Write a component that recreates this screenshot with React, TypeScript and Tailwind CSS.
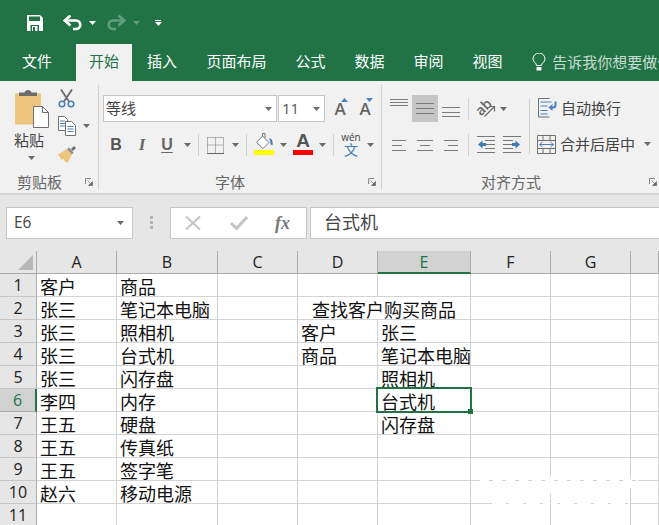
import React from "react";

const GREEN = "#217346";

const Caret = ({ color = "#6a6a6a" }: { color?: string }) => (
  <svg width="7" height="4" viewBox="0 0 7 4" className="shrink-0">
    <path d="M0 0h7L3.5 4z" fill={color} />
  </svg>
);

const Launcher = () => (
  <svg width="8" height="8" viewBox="0 0 8 8" className="shrink-0">
    <path d="M.5 6V.5H6" fill="none" stroke="#8a8a8a" />
    <path d="M2.5 2.5l4 4M7.5 3.5v4h-4z" fill="#6a6a6a" stroke="#6a6a6a" strokeWidth=".7" />
  </svg>
);

const Lines = ({ w, h, lines, color = "#7b7b7b" }: { w: number; h: number; lines: number[][]; color?: string }) => (
  <svg width={w} height={h} viewBox={`0 0 ${w} ${h}`} className="shrink-0">
    {lines.map(([x, len, y], i) => (
      <rect key={i} x={x} y={y} width={len} height="1" fill={color} />
    ))}
  </svg>
);

const VSep = ({ h }: { h: string }) => <div className={`w-px shrink-0 bg-[#d0d0d0] ${h}`} />;

const Slot = ({ w, children }: { w: string; children: React.ReactNode }) => (
  <div className={`flex shrink-0 items-center justify-center ${w}`}>{children}</div>
);

const SaveIcon = () => (
  <svg width="16" height="16" viewBox="0 0 16 16">
    <path d="M0 0h13l3 3v13H0z" fill="#fff" />
    <rect x="2" y="1.500" width="11" height="4.500" fill={GREEN} />
    <rect x="3.500" y="10" width="8.500" height="6" fill={GREEN} />
    <rect x="5" y="11" width="5.500" height="5" fill="#fff" />
    <rect x="6" y="12" width="2" height="4" fill={GREEN} />
  </svg>
);

const Undo = ({ opacity = 1, flip = false }: { opacity?: number; flip?: boolean }) => (
  <svg width="19" height="16" viewBox="0 0 19 16" style={{ opacity }} className={flip ? "-scale-x-100" : ""}>
    <path d="M3 5.500h10a4.200 4.200 0 0 1 0 8.500h-3" fill="none" stroke="#fff" strokeWidth="2.600" />
    <path d="M7.500 0.500L1.800 5.500l5.700 5" fill="none" stroke="#fff" strokeWidth="2.600" />
  </svg>
);

const PasteIcon = () => (
  <svg width="36" height="40" viewBox="0 0 36 40">
    <path d="M1 5.500h26v31H1z" fill="#eec57f" />
    <path d="M5 8V4.500h5.500C11 1 17 1 17.500 4.500H23V8z" fill="#6d6d6d" />
    <path d="M19.500 18.500h9l6 6v15h-15z" fill="#fff" stroke="#707070" />
    <path d="M28.500 18.500v6h6" fill="none" stroke="#707070" />
  </svg>
);

const Scissors = () => (
  <svg width="17" height="19" viewBox="0 0 17 19">
    <path d="M3 .5l8 12M14 .5L6 12.500" fill="none" stroke="#6a6a6a" strokeWidth="1.800" />
    <circle cx="4" cy="15" r="2.800" fill="none" stroke="#4a81bd" strokeWidth="1.500" />
    <circle cx="13" cy="15" r="2.800" fill="none" stroke="#4a81bd" strokeWidth="1.500" />
  </svg>
);

const CopyIcon = () => (
  <svg width="18" height="20" viewBox="0 0 18 20">
    <path d="M.5.500h6l3 3v11h-9z" fill="#fff" stroke="#707070" />
    <path d="M2 5h5M2 7.500h5M2 10h5" stroke="#4a81bd" />
    <path d="M7.500 5.500h6l4 4v10h-10z" fill="#fff" stroke="#707070" />
    <path d="M9.500 10.500h6M9.500 13h6M9.500 15.500h6" stroke="#4a81bd" />
  </svg>
);

const BrushIcon = () => (
  <svg width="19" height="18" viewBox="0 0 19 18">
    <path d="M0 9.500L9 4l5 5.500-4.500 8.500-3-2-1-2-2 .5z" fill="#eec57f" />
    <path d="M9 4l5 5.500 1.500-2L11 2.500z" fill="#8a8a8a" />
    <path d="M13 4l3-3 2 2-3 3z" fill="#6d6d6d" />
  </svg>
);

const BorderIcon = () => (
  <svg width="17" height="17" viewBox="0 0 17 17">
    <path d="M.5.500h16v15M.5.500v15M8.500.500v15M.5 8h16" fill="none" stroke="#777" strokeDasharray="1 1" />
    <rect x="0" y="16" width="17" height="1" fill="#666" />
  </svg>
);

const FillIcon = () => (
  <svg width="20" height="22" viewBox="0 0 20 22">
    <path d="M2.500 9.500l6-6.500 6.500 6.500-6 6z" fill="#fff" stroke="#777" />
    <path d="M8.500 3V.5h2.500V5" fill="none" stroke="#777" />
    <path d="M15 5c3 1 4 3 3.500 7-1 .5-2-.5-2-1.500 0-1.500-.5-3-1.500-5.500z" fill="#3f7ab8" />
    <rect x="0" y="17" width="20" height="5" fill="#ffff00" />
  </svg>
);

const WrapIcon = () => (
  <svg width="20" height="20" viewBox="0 0 20 20">
    <path d="M.5.500h11M.5.500v18.500h11" fill="none" stroke="#707070" />
    <path d="M2.500 4h11M2.500 8h7M2.500 12.500h7M2.500 16h7" stroke="#4a81bd" />
    <path d="M17.500 3.500v3.500a2.500 2.500 0 0 1-2.500 2.500h-3" fill="none" stroke="#4a81bd" strokeWidth="2" />
    <path d="M14.500 6l-4 3.500 4 3.500z" fill="#4a81bd" />
  </svg>
);

const MergeIcon = () => (
  <svg width="19" height="19" viewBox="0 0 19 19">
    <path d="M.5.500h18v18H.5zM.5 5.500h18M.5 13.500h18M6 .5v5M13 .5v5M6 13.500v5M13 13.500v5" fill="none" stroke="#707070" />
    <path d="M3 9.500h13" stroke="#4a81bd" />
    <path d="M5.500 7l-3 2.500 3 2.500M13.500 7l3 2.500-3 2.500" fill="none" stroke="#4a81bd" />
  </svg>
);

const IndentIcon = ({ flip = false }: { flip?: boolean }) => (
  <svg width="18" height="18" viewBox="0 0 18 18" className={flip ? "-scale-x-100" : ""}>
    <path d="M0 .5h18M8 4.500h10M8 8.500h10M8 12.500h10M0 16.500h18" stroke="#777" />
    <path d="M1 8.500l4.500-4v2.500H9v3H5.500v2.500z" fill="#3f7ab8" />
  </svg>
);

const OrientIcon = () => (
  <svg width="12" height="12" viewBox="0 0 12 12">
    <path d="M.5 11.500L10.500 1.500M5.500 1.500h5v5" fill="none" stroke="#6a6a6a" strokeWidth="1.200" />
  </svg>
);

const Tab = ({ label, extra = "" }: { label: string; extra?: string }) => (
  <div className={`flex h-[37px] shrink-0 items-center pb-[2px] text-[15px] text-white ${extra}`}>{label}</div>
);

const GroupLabel = ({ label, extra }: { label: string; extra: string }) => (
  <div className={`flex h-[18px] shrink-0 items-center text-[15px] text-[#666] ${extra}`}>{label}</div>
);

const cols = ["A", "B", "C", "D", "E", "F", "G", ""];
const colW = ["w-[80px]", "w-[101px]", "w-[80px]", "w-[80px]", "w-[93px]", "w-[80px]", "w-[80px]", "w-[28px]"];

const rows: Record<number, string[]> = {
  1: ["客户", "商品"],
  2: ["张三", "笔记本电脑"],
  3: ["张三", "照相机", "", "客户", "张三"],
  4: ["张三", "台式机", "", "商品", "笔记本电脑"],
  5: ["张三", "闪存盘", "", "", "照相机"],
  6: ["李四", "内存", "", "", "台式机"],
  7: ["王五", "硬盘", "", "", "闪存盘"],
  8: ["王五", "传真纸"],
  9: ["王五", "签字笔"],
  10: ["赵六", "移动电源"],
  11: [],
};

const Cell = ({ i, text, selected }: { i: number; text: string; selected?: boolean }) => (
  <div
    className={`relative flex h-[23px] shrink-0 items-center whitespace-nowrap border-r border-b border-[#d4d4d4] pl-[3px] pt-[1px] text-[18px] leading-[20px] text-[#111] ${colW[i]}`}
  >
    {text}
    {selected && (
      <div className="pointer-events-none absolute -left-[2px] -top-[2px] z-10 h-[26px] w-[96px] border-2 border-[#217346]">
        <div className="absolute -bottom-[3px] -right-[3px] h-[5px] w-[5px] bg-[#217346]" />
      </div>
    )}
  </div>
);

export default function App() {
  const cjk = "font-['Noto_Sans_CJK_SC','Liberation_Sans',sans-serif]";
  return (
    <div className={`relative flex h-[525px] w-[659px] flex-col overflow-hidden bg-white ${cjk}`}>
      {/* title bar */}
      <div className="flex h-[44px] shrink-0 items-center bg-[#217346] pl-[27px] pt-[1px]">
        <SaveIcon />
        <div className="ml-[20px]"><Undo /></div>
        <div className="ml-[7px]"><Caret color="#fff" /></div>
        <div className="ml-[11px]"><Undo opacity={0.3} flip /></div>
        <div className="ml-[7px] opacity-30"><Caret color="#fff" /></div>
        <div className="ml-[15px] flex flex-col gap-[1px]">
          <div className="h-px w-[6px] bg-white" />
          <Caret color="#fff" />
        </div>
      </div>

      {/* tabs */}
      <div className="flex h-[37px] shrink-0 items-stretch overflow-hidden bg-[#217346] pl-[7.500px]">
        <Tab label="文件" extra="px-[14.500px]" />
        <Tab label="开始" extra="ml-[9.500px] bg-[#f1f1f1] px-[13px] !text-[#217346]" />
        <Tab label="插入" extra="px-[15px]" />
        <Tab label="页面布局" extra="px-[14.500px]" />
        <Tab label="公式" extra="px-[14.500px]" />
        <Tab label="数据" extra="px-[14.500px]" />
        <Tab label="审阅" extra="px-[14.500px]" />
        <Tab label="视图" extra="px-[14.500px]" />
        <div className="ml-[15px] flex shrink-0 items-center gap-[6px] pb-[1px]">
          <svg width="14" height="18" viewBox="0 0 14 18">
            <path d="M4.500 12.500C4.500 10 1 9 1 6a6 6 0 0 1 12 0c0 3-3.500 4-3.500 6.500z" fill="none" stroke="#fff" />
            <rect x="4.500" y="14" width="5" height="3.500" fill="#fff" />
          </svg>
          <span className="whitespace-nowrap text-[15px] text-[#c8dcd1]">告诉我你想要做什么</span>
        </div>
      </div>

      {/* ribbon */}
      <div className="flex h-[114px] shrink-0 border-b-2 border-[#d6d6d6] bg-[#f1f1f1] text-[#444]">
        {/* clipboard */}
        <div className="flex w-[98px] shrink-0 flex-col">
          <div className="flex h-[92px] shrink-0">
            <div className="ml-[14px] mt-[7px] flex w-[36px] shrink-0 flex-col">
              <PasteIcon />
              <div className="mt-[2px] text-[15px] leading-[20px] text-[#444]">粘贴</div>
              <div className="ml-[14px] mt-[6px]"><Caret /></div>
            </div>
            <div className="ml-[8px] flex flex-col">
              <div className="mt-[8px]"><Scissors /></div>
              <div className="mt-[8px] flex items-center gap-[7px]">
                <CopyIcon />
                <Caret />
              </div>
              <div className="mt-[9px]"><BrushIcon /></div>
            </div>
          </div>
          <div className="flex items-center">
            <GroupLabel label="剪贴板" extra="ml-[17px]" />
            <div className="ml-[23px]"><Launcher /></div>
          </div>
        </div>
        <div className="my-[4px] w-px shrink-0 bg-[#d0d0d0]" />

        {/* font */}
        <div className="flex w-[282px] shrink-0 flex-col">
          <div className="flex h-[92px] shrink-0 flex-col">
            <div className="mt-[14px] flex h-[27px] items-stretch">
              <div className="ml-[4px] flex w-[174px] items-center justify-between border border-[#c6c6c6] bg-white pl-[2px] pr-[4px] text-[15px] text-[#444]">
                <span>等线</span>
                <Caret />
              </div>
              <div className="ml-[1px] flex w-[47px] items-center justify-between border border-[#c6c6c6] bg-white pl-[3px] pr-[4px] font-['Open_Sans',sans-serif] text-[15px] text-[#555]">
                <span>11</span>
                <Caret />
              </div>
              <div className="relative ml-[8px] flex w-[14px] items-center justify-center pt-[1px] font-['Open_Sans',sans-serif] text-[17px] font-semibold text-[#666]">
                A
                <svg width="7" height="4" viewBox="0 0 7 4" className="absolute -right-[1px] top-[3px]"><path d="M3.500 0L7 4H0z" fill="#4a81bd" /></svg>
              </div>
              <div className="relative ml-[11px] flex w-[14px] items-center justify-center pt-[1px] font-['Open_Sans',sans-serif] text-[17px] font-semibold text-[#666]">
                A
                <svg width="7" height="4" viewBox="0 0 7 4" className="absolute -right-[1px] top-[3px]"><path d="M0 0h7L3.500 4z" fill="#4a81bd" /></svg>
              </div>
            </div>
            <div className="mt-[11px] flex h-[24px] items-center pl-[5px]">
              <Slot w="w-[24px]"><span className="font-['Liberation_Sans',sans-serif] text-[16px] font-bold text-[#555]">B</span></Slot>
              <Slot w="w-[28px]"><span className="font-['Liberation_Serif',serif] text-[17px] font-bold italic text-[#666]">I</span></Slot>
              <Slot w="w-[22px]"><span className="font-['Liberation_Sans',sans-serif] text-[16px] font-bold leading-[18px] text-[#666] underline underline-offset-2">U</span></Slot>
              <Slot w="w-[18px]"><Caret /></Slot>
              <div className="ml-[2px]"><VSep h="h-[22px]" /></div>
              <div className="ml-[8px]"><BorderIcon /></div>
              <Slot w="w-[22px]"><Caret /></Slot>
              <VSep h="h-[22px]" />
              <div className="mb-[2px] ml-[7px]"><FillIcon /></div>
              <Slot w="w-[18px]"><Caret /></Slot>
              <div className="mb-[4px] ml-[1px] flex w-[20px] flex-col items-center">
                <span className="font-['Liberation_Sans',sans-serif] text-[19px] font-bold leading-[19px] text-[#555]">A</span>
                <div className="h-[5px] w-[20px] bg-[#ff0000]" />
              </div>
              <Slot w="w-[18px]"><Caret /></Slot>
              <div className="ml-[2px]"><VSep h="h-[22px]" /></div>
              <div className="mb-[3px] flex w-[33px] shrink-0 flex-col items-center pl-[1px]">
                <span className="font-['Open_Sans',sans-serif] text-[10px] leading-[10px] text-[#444]">wén</span>
                <span className="text-[14px] leading-[14px] text-[#3f7ab8]">文</span>
              </div>
              <Caret />
            </div>
          </div>
          <div className="flex items-center">
            <GroupLabel label="字体" extra="ml-[116px]" />
            <div className="ml-[123px]"><Launcher /></div>
          </div>
        </div>
        <div className="my-[4px] w-px shrink-0 bg-[#d0d0d0]" />

        {/* alignment */}
        <div className="flex min-w-0 flex-1 flex-col">
          <div className="flex h-[92px] shrink-0">
            <div className="flex w-[147px] shrink-0 flex-col">
              <div className="mt-[14px] flex h-[27px] items-center">
                <div className="ml-[8px]"><Lines w={18} h={27} lines={[[0, 18, 4], [0, 18, 7], [0, 18, 10]]} /></div>
                <div className="ml-[4px] flex h-[27px] w-[26px] items-center justify-center bg-[#c6c6c6]">
                  <Lines w={18} h={11} lines={[[0, 18, 0], [0, 18, 5], [0, 18, 10]]} />
                </div>
                <div className="ml-[4px]"><Lines w={18} h={27} lines={[[0, 18, 12], [0, 18, 17], [0, 18, 21]]} /></div>
                <div className="ml-[8px]"><VSep h="h-[22px]" /></div>
                <div className="relative ml-[7px] flex h-[22px] w-[20px] items-center">
                  <span className="-translate-x-[1px] -translate-y-[2px] rotate-[-45deg] font-['Open_Sans',sans-serif] text-[14px] font-semibold leading-none text-[#666]">ab</span>
                  <div className="absolute bottom-[3px] right-[0px]"><OrientIcon /></div>
                </div>
                <div className="ml-[4px]"><Caret /></div>
              </div>
              <div className="mt-[11px] flex h-[24px] items-center">
                <div className="ml-[10px]"><Lines w={14} h={11} lines={[[0, 14, 0], [0, 10, 5], [0, 14, 10]]} /></div>
                <div className="ml-[11px]"><Lines w={16} h={11} lines={[[0, 16, 0], [3, 10, 5], [0, 16, 10]]} /></div>
                <div className="ml-[11px]"><Lines w={14} h={11} lines={[[0, 14, 0], [4, 10, 5], [0, 14, 10]]} /></div>
                <div className="ml-[10px]"><VSep h="h-[22px]" /></div>
                <div className="ml-[8px]"><IndentIcon /></div>
                <div className="ml-[8px]"><IndentIcon flip /></div>
              </div>
            </div>
            <div className="mt-[18px]"><VSep h="h-[55px]" /></div>
            <div className="flex min-w-0 flex-1 flex-col text-[15px] text-[#444]">
              <div className="mt-[16px] flex h-[22px] items-center pl-[8px]">
                <WrapIcon />
                <span className="ml-[3px] whitespace-nowrap">自动换行</span>
              </div>
              <div className="mt-[14px] flex h-[22px] items-center pl-[7px]">
                <MergeIcon />
                <span className="ml-[4px] whitespace-nowrap">合并后居中</span>
                <div className="ml-[9px]"><Caret /></div>
              </div>
            </div>
          </div>
          <div className="flex items-center">
            <GroupLabel label="对齐方式" extra="ml-[99px]" />
            <div className="ml-[108px]"><Launcher /></div>
          </div>
        </div>
      </div>

      {/* formula bar */}
      <div className="flex h-[56px] shrink-0 items-start bg-[#e6e6e6] pt-[12px]">
        <div className="ml-[6px] flex h-[32px] w-[127px] items-center justify-between border border-[#c6c6c6] bg-white pl-[7px] pr-[8px] font-['Open_Sans',sans-serif] text-[15.500px] text-[#444]">
          <span>E6</span>
          <Caret />
        </div>
        <div className="ml-[17px] mt-[9px] flex flex-col gap-[2px]">
          <div className="h-[3px] w-[3px] bg-[#b4b4b4]" />
          <div className="h-[3px] w-[3px] bg-[#b4b4b4]" />
          <div className="h-[3px] w-[3px] bg-[#b4b4b4]" />
        </div>
        <div className="ml-[17px] flex h-[32px] w-[137px] items-center border border-[#c6c6c6] bg-white">
          <svg width="16" height="14" viewBox="0 0 16 14" className="ml-[14px]">
            <path d="M1 0.500l14 13M15 0.500l-14 13" stroke="#c4c4c4" strokeWidth="2" />
          </svg>
          <svg width="18" height="14" viewBox="0 0 18 14" className="ml-[29px]">
            <path d="M1 7l5.500 5.500L17 1" fill="none" stroke="#c4c4c4" strokeWidth="3" />
          </svg>
          <span className="ml-[27px] font-['Liberation_Serif',serif] text-[18px] font-bold italic leading-none text-[#777]">fx</span>
        </div>
        <div className="ml-[3px] flex h-[32px] flex-1 items-center border border-r-0 border-[#c6c6c6] bg-white pb-[3px] pl-[13px] text-[18px] text-[#444]">
          台式机
        </div>
      </div>

      {/* column headers */}
      <div className="flex h-[23px] shrink-0 bg-[#e6e6e6] font-['Open_Sans',sans-serif] text-[16px] text-[#222]">
        <div className="relative flex h-[23px] w-[37px] shrink-0 items-end justify-end border-r border-b border-[#ababab] pb-[3px] pr-[3px]">
          <svg width="15" height="15" viewBox="0 0 15 15"><path d="M15 0v15H0z" fill="#b8b8b8" /></svg>
        </div>
        {cols.map((c, i) => (
          <div
            key={i}
            className={
              c === "E"
                ? `flex shrink-0 items-center justify-center border-r border-b-2 border-r-[#ababab] border-b-[#217346] bg-[#d2d2d2] text-[#217346] ${colW[i]}`
                : `flex shrink-0 items-center justify-center border-r border-b border-[#ababab] ${colW[i]}`
            }
          >
            {c}
          </div>
        ))}
      </div>

      {/* sheet */}
      <div className="flex min-h-0 flex-1 flex-col overflow-hidden">
        {Object.keys(rows).map((k) => {
          const r = Number(k);
          const values = rows[r];
          return (
            <div key={r} className="flex h-[23px] shrink-0">
              <div
                className={`flex h-[23px] w-[37px] shrink-0 items-center justify-center border-r border-b font-['Open_Sans',sans-serif] text-[16px] ${
                  r === 6
                    ? "border-r-2 border-r-[#217346] border-b-[#ababab] bg-[#d2d2d2] text-[#217346]"
                    : "border-r-[#ababab] border-b-[#c6c6c6] bg-[#e6e6e6] text-[#222]"
                }`}
              >
                {r}
              </div>
              {r === 2 ? (
                <>
                  <Cell i={0} text={values[0]} />
                  <Cell i={1} text={values[1]} />
                  <Cell i={2} text="" />
                  <div className="flex h-[23px] w-[173px] shrink-0 items-center justify-center whitespace-nowrap border-r border-b border-[#d4d4d4] pt-[1px] text-[18px] leading-[20px] text-[#111]">
                    查找客户购买商品
                  </div>
                  <Cell i={5} text="" />
                  <Cell i={6} text="" />
                  <Cell i={7} text="" />
                </>
              ) : (
                cols.map((_, i) => <Cell key={i} i={i} text={values[i] ?? ""} selected={r === 6 && i === 4} />)
              )}
            </div>
          );
        })}
      </div>

      {/* faint white smudge over the gridlines, bottom right of the picture */}
      <svg width="659" height="525" viewBox="0 0 659 525" className="pointer-events-none absolute left-0 top-0">
        <path d="M480 480.500h158" stroke="#fff" strokeDasharray="9 4" fill="none" />
        <path d="M492 503.500h138" stroke="#fff" strokeDasharray="14 3" fill="none" />
        <path d="M550.500 477v17M630.500 478v10" stroke="#fff" fill="none" />
      </svg>
    </div>
  );
}
